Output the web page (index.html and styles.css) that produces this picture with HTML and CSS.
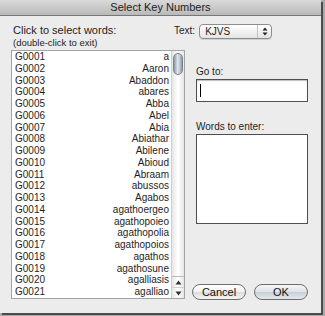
FILE: index.html
```html
<!DOCTYPE html>
<html lang="en">
<head>
  <meta charset="UTF-8">
  <title>Select Key Numbers</title>
  <link rel="stylesheet" href="styles.css">
</head>
<body>
  <div class="window">
    <div class="titlebar">Select Key Numbers</div>
    <div class="content">
      <div class="top">
        <div class="labels">
          <div class="label-main">Click to select words:</div>
          <div class="label-sub">(double-click to exit)</div>
        </div>
        <div class="text-pick">
          <span class="text-label">Text:</span>
          <div class="popup">
            <span class="popup-value">KJVS</span>
            <span class="popup-arrows">
              <svg width="6" height="9" viewBox="0 0 6 9"><path d="M3 0.5 L5.5 3.5 H0.5 Z M3 8.5 L5.5 5.5 H0.5 Z" fill="#222"/></svg>
            </span>
          </div>
        </div>
      </div>

      <div class="main">
        <div class="list">
          <ul class="rows">
            <li><span>G0001</span><span>a</span></li>
            <li><span>G0002</span><span>Aaron</span></li>
            <li><span>G0003</span><span>Abaddon</span></li>
            <li><span>G0004</span><span>abares</span></li>
            <li><span>G0005</span><span>Abba</span></li>
            <li><span>G0006</span><span>Abel</span></li>
            <li><span>G0007</span><span>Abia</span></li>
            <li><span>G0008</span><span>Abiathar</span></li>
            <li><span>G0009</span><span>Abilene</span></li>
            <li><span>G0010</span><span>Abioud</span></li>
            <li><span>G0011</span><span>Abraam</span></li>
            <li><span>G0012</span><span>abussos</span></li>
            <li><span>G0013</span><span>Agabos</span></li>
            <li><span>G0014</span><span>agathoergeo</span></li>
            <li><span>G0015</span><span>agathopoieo</span></li>
            <li><span>G0016</span><span>agathopolia</span></li>
            <li><span>G0017</span><span>agathopoios</span></li>
            <li><span>G0018</span><span>agathos</span></li>
            <li><span>G0019</span><span>agathosune</span></li>
            <li><span>G0020</span><span>agalliasis</span></li>
            <li><span>G0021</span><span>agalliao</span></li>
          </ul>
          <div class="scrollbar">
            <div class="thumb"></div>
            <div class="arrows">
              <div class="arrow">
                <svg width="7" height="5" viewBox="0 0 7 5"><path d="M3.5 0.5 L6.5 4.5 H0.5 Z" fill="#333"/></svg>
              </div>
              <div class="arrow">
                <svg width="7" height="5" viewBox="0 0 7 5"><path d="M3.5 4.5 L6.5 0.5 H0.5 Z" fill="#333"/></svg>
              </div>
            </div>
          </div>
        </div>

        <div class="side">
          <div class="field-label goto-label">Go to:</div>
          <div class="input"><span class="caret"></span></div>
          <div class="field-label words-label">Words to enter:</div>
          <div class="textarea"></div>
          <div class="buttons">
            <button class="btn">Cancel</button>
            <button class="btn btn-ok">OK</button>
          </div>
        </div>
      </div>
    </div>
  </div>
</body>
</html>
```

FILE: styles.css
```css
html, body {
  margin: 0;
  padding: 0;
}

body {
  width: 325px;
  height: 316px;
  background: #a9a9a9;
  font-family: 'Liberation Sans', Arial, sans-serif;
  color: #1e1e1e;
  overflow: hidden;
}

.window {
  width: 321px;
  height: 313px;
  background: #ececec;
  box-shadow: 2px 2px 0 #4b4b4b;
}

.titlebar {
  height: 15px;
  line-height: 15px;
  text-align: center;
  font-size: 11px;
  color: #222;
  background: linear-gradient(#dadada, #b9b9b9);
  border-bottom: 1px solid #777;
}

.content {
  padding: 0 0 0 11px;
}

/* header row */
.top {
  display: flex;
  height: 34px;
}

.labels {
  width: 161px;
  padding-top: 8px;
  padding-left: 2px;
}

.label-main {
  font-size: 11px;
  line-height: 13px;
}

.label-sub {
  font-size: 9.5px;
  line-height: 12px;
}

.text-pick {
  display: flex;
  align-items: flex-start;
  padding-top: 8px;
}

.text-label {
  font-size: 10px;
  line-height: 14px;
  margin-right: 4px;
}

.popup {
  display: flex;
  width: 71px;
  height: 13px;
  border: 1px solid #8d8d8d;
  border-radius: 4px;
  background: linear-gradient(#ffffff, #e4e4e4);
  box-shadow: 0 1px 0 #d0d0d0;
}

.popup-value {
  flex: 1;
  font-size: 10px;
  line-height: 13px;
  padding-left: 5px;
}

.popup-arrows {
  width: 13px;
  display: flex;
  align-items: center;
  justify-content: center;
  border-left: 1px solid #c2c2c2;
}

/* list + side */
.main {
  display: flex;
}

.list {
  display: flex;
  width: 172px;
  height: 247px;
  border: 1px solid #a4a4a4;
  background: #fff;
}

.rows {
  list-style-type: none;
  margin: 0;
  padding: 0 2px 0 3px;
  flex: 1;
  font-size: 10px;
}

.rows li {
  display: flex;
  justify-content: space-between;
  height: 11.75px;
  line-height: 11.75px;
}

.scrollbar {
  width: 12px;
  display: flex;
  flex-direction: column;
  justify-content: space-between;
  border-left: 1px solid #cfcfcf;
  background: linear-gradient(90deg, #e6e6e6, #ffffff 50%, #e6e6e6);
}

.thumb {
  margin: 2px 1px 0 1px;
  height: 20px;
  border-radius: 5px;
  border: 1px solid #7b8590;
  background: linear-gradient(90deg, #8c97a3, #dfe4ea 45%, #c3cad2 70%, #8c97a3);
}

.arrows {
  border-top: 1px solid #b9b9b9;
}

.arrow {
  height: 10px;
  display: flex;
  align-items: center;
  justify-content: center;
}

.arrow + .arrow {
  border-top: 1px solid #d0d0d0;
}

.side {
  display: flex;
  flex-direction: column;
  width: 112px;
  margin-left: 11px;
}

.field-label {
  font-size: 10px;
  line-height: 12px;
  margin-bottom: 1px;
}

.goto-label {
  margin-top: 16px;
}

.words-label {
  margin-top: 19px;
}

.input {
  height: 21px;
  border: 1px solid #4f4f4f;
  background: #fff;
  box-shadow: inset 0 1px 1px #bdbdbd;
  padding: 4px 3px;
  box-sizing: border-box;
  height: 23px;
}

.caret {
  display: block;
  width: 1px;
  height: 13px;
  background: #000;
}

.textarea {
  height: 88px;
  border: 1px solid #4f4f4f;
  background: #fff;
}

.buttons {
  display: flex;
  gap: 8px;
  margin: 60px 0 0 -4px;
}

.btn {
  width: 54px;
  height: 16px;
  padding: 0;
  border: 1px solid #6e6e6e;
  border-radius: 8px;
  font-family: 'Liberation Sans', Arial, sans-serif;
  font-size: 11px;
  line-height: 14px;
  color: #111;
  background: linear-gradient(#ffffff, #f0f0f0 50%, #dcdcdc 51%, #f4f4f4);
}

.btn-ok {
  background: linear-gradient(#f4f6f8, #dde2e7 50%, #c8ced5 51%, #e6eaee);
}
```
